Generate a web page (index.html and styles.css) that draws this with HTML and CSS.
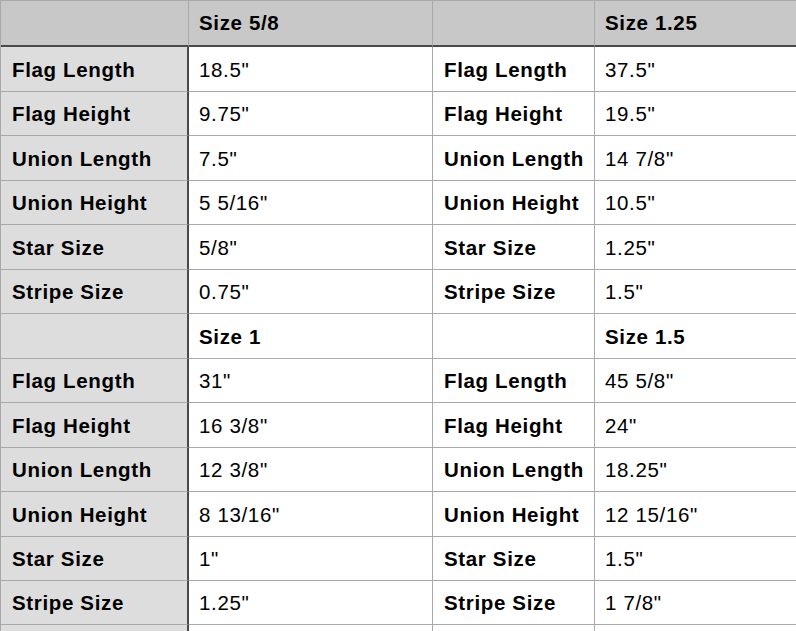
FILE: index.html
```html
<!DOCTYPE html>
<html>
<head>
<meta charset="utf-8">
<link rel="stylesheet" href="styles.css">
</head>
<body>
<div class="sheet">
  <div class="c h k"></div><div class="c h v b">Size 5/8</div><div class="c h"></div><div class="c h v b">Size 1.25</div>

  <div class="c k b">Flag Length</div><div class="c v">18.5"</div><div class="c b">Flag Length</div><div class="c v">37.5"</div>
  <div class="c k b">Flag Height</div><div class="c v">9.75"</div><div class="c b">Flag Height</div><div class="c v">19.5"</div>
  <div class="c k b">Union Length</div><div class="c v">7.5"</div><div class="c b">Union Length</div><div class="c v">14 7/8"</div>
  <div class="c k b">Union Height</div><div class="c v">5 5/16"</div><div class="c b">Union Height</div><div class="c v">10.5"</div>
  <div class="c k b">Star Size</div><div class="c v">5/8"</div><div class="c b">Star Size</div><div class="c v">1.25"</div>
  <div class="c k b">Stripe Size</div><div class="c v">0.75"</div><div class="c b">Stripe Size</div><div class="c v">1.5"</div>

  <div class="c k"></div><div class="c v b">Size 1</div><div class="c"></div><div class="c v b">Size 1.5</div>

  <div class="c k b">Flag Length</div><div class="c v">31"</div><div class="c b">Flag Length</div><div class="c v">45 5/8"</div>
  <div class="c k b">Flag Height</div><div class="c v">16 3/8"</div><div class="c b">Flag Height</div><div class="c v">24"</div>
  <div class="c k b">Union Length</div><div class="c v">12 3/8"</div><div class="c b">Union Length</div><div class="c v">18.25"</div>
  <div class="c k b">Union Height</div><div class="c v">8 13/16"</div><div class="c b">Union Height</div><div class="c v">12 15/16"</div>
  <div class="c k b">Star Size</div><div class="c v">1"</div><div class="c b">Star Size</div><div class="c v">1.5"</div>
  <div class="c k b">Stripe Size</div><div class="c v">1.25"</div><div class="c b">Stripe Size</div><div class="c v">1 7/8"</div>

  <div class="c k e"></div><div class="c v e"></div><div class="c e"></div><div class="c v e"></div>
</div>
</body>
</html>
```

FILE: styles.css
```css
html, body {
  margin: 0;
  padding: 0;
  background: #ffffff;
  overflow: hidden;
}

.sheet {
  display: grid;
  grid-template-columns: 188px 244px 162px 202px;
  grid-template-rows: 46px repeat(6, 45px 44px) 44px 6px;
  border-top: 1px solid #a9a9a9;
  border-left: 1px solid #a9a9a9;
  width: 796px;
  box-sizing: border-box;
  font-family: "Liberation Sans", Arial, Helvetica, sans-serif;
  font-size: 20.5px;
  letter-spacing: 0.65px;
  color: #000;
}

.c {
  box-sizing: border-box;
  border-right: 1px solid #a9a9a9;
  border-bottom: 1px solid #a9a9a9;
  display: flex;
  align-items: center;
  padding-left: 11px;
  padding-top: 1px;
  white-space: nowrap;
  background: #ffffff;
}

.k {
  background: #dddddd;
  border-right: 2px solid #4a4a4a;
}

.h {
  background: #c8c8c8;
  border-bottom: 2px solid #4a4a4a;
  padding-top: 0;
}

.h.k {
  border-right: 1px solid #a9a9a9;
}

.v {
  padding-left: 10px;
}

.e {
  border-bottom: none;
}

.b {
  font-weight: bold;
}
```
